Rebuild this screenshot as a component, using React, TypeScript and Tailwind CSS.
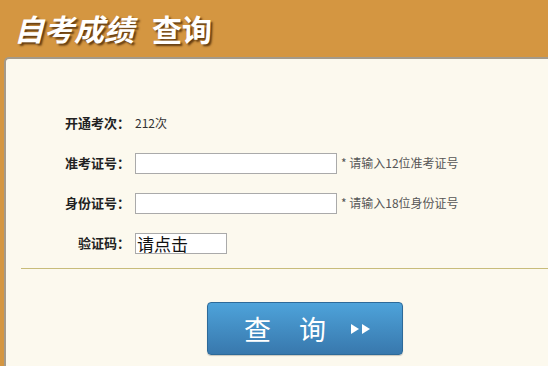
import { useState } from 'react';

const rows = [
    { label: '准考证号：', hint: '* 请输入12位准考证号' },
    { label: '身份证号：', hint: '* 请输入18位身份证号' },
];

export default function App() {
    const [values, setValues] = useState<string[]>(['', '']);

    return (
        <div className="w-[548px] h-[366px] overflow-hidden bg-[#d49641] flex flex-col" style={{ fontFamily: '"Noto Sans CJK SC", "Noto Sans", sans-serif' }}>
            {/* header */}
            <div className="h-[57px] shrink-0 flex items-center pl-[14px] pb-[2px] text-white font-bold text-[30px] leading-none [text-shadow:2px_2px_2px_rgba(60,30,0,0.75)]">
                <span className="italic">自考成绩</span>
                <span className="ml-[18px]">查询</span>
            </div>

            {/* panel */}
            <div className="flex-1 ml-[4px] bg-[#fcf9ee] rounded-tl-[5px] border-t-2 border-l-2 border-[#a49a8a] pt-[44px]">
                <div className="h-[40px] flex items-center text-[13px] text-[#222]">
                    <div className="w-[124px] text-right font-bold">开通考次：</div>
                    <div className="ml-[5px] text-[#333] text-[12px]">212次</div>
                </div>

                {rows.map((row, i) => (
                    <div key={row.label} className="h-[40px] flex items-center text-[13px] text-[#222]">
                        <div className="w-[124px] text-right font-bold">{row.label}</div>
                        <input
                            value={values[i]}
                            onChange={e => setValues(v => v.map((x, j) => (j === i ? e.target.value : x)))}
                            className="ml-[5px] w-[202px] h-[21px] bg-white border border-[#aaa] outline-none px-1 text-[12px]"
                        />
                        <span className="ml-[4px] text-[12px] text-[#555]">{row.hint}</span>
                    </div>
                ))}

                <div className="h-[40px] flex items-center text-[13px] text-[#222]">
                    <div className="w-[124px] text-right font-bold">验证码：</div>
                    <div className="ml-[5px] w-[92px] h-[21px] bg-white border border-[#aaa] flex items-center pl-[1px] text-[17px] leading-none text-[#111]">
                        请点击
                    </div>
                </div>

                <div className="ml-[15px] mt-[5px] h-px bg-[#c8bc7a]" />

                <div className="pt-[33px] pl-[201px]">
                    <button className="w-[196px] h-[53px] rounded-[4px] border border-[#2d6a99] bg-gradient-to-b from-[#4ea3da] to-[#3878ad] text-white text-[27px] leading-none flex items-center shadow-[0_1px_1px_rgba(0,0,0,0.2)]">
                        <span className="ml-[36px]">查</span>
                        <span className="ml-[28px]">询</span>
                        <span className="ml-[24px] flex items-center">
                            <svg width="22" height="12" viewBox="0 0 22 12">
                                <polygon points="1,1 9,6 1,11" fill="white" />
                                <polygon points="12,1 20,6 12,11" fill="white" />
                            </svg>
                        </span>
                    </button>
                </div>
            </div>
        </div>
    );
}
